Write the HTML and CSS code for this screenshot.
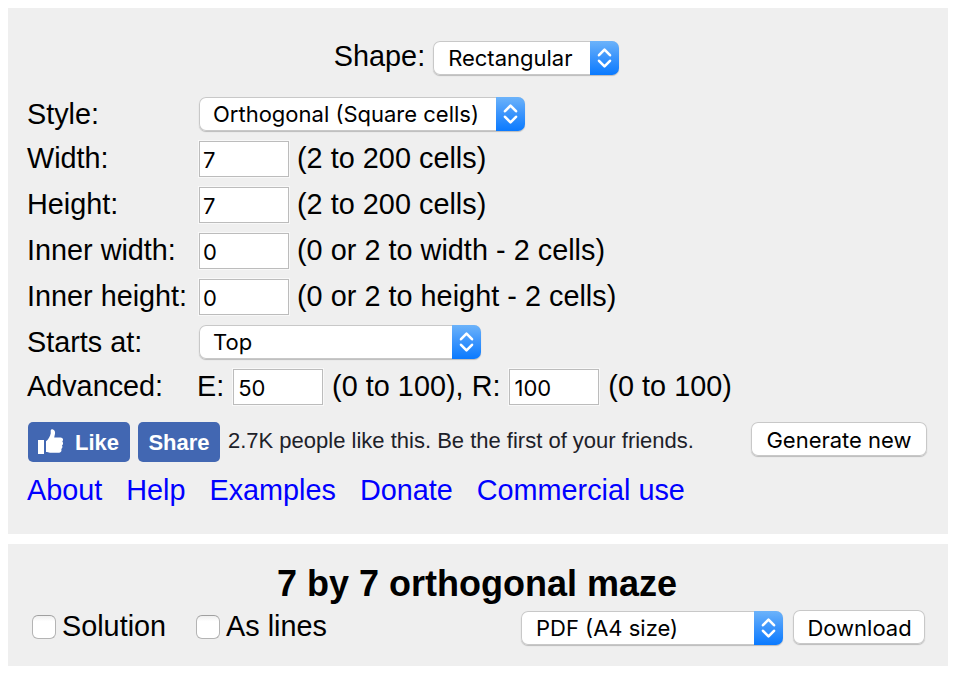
FILE: index.html
```
<!DOCTYPE html>
<html lang="en">
<head>
<meta charset="utf-8">
<title>Maze generator</title>
<link rel="stylesheet" href="styles.css">
</head>
<body>
<form class="panel settings">
  <div class="shape-row">
    <span>Shape:</span>
    <div class="select shape"><span class="value">Rectangular</span><span class="cap"><svg width="15" height="22" viewBox="0 0 15 22"><path d="M2 8.2 7.5 2.6 13 8.2M2 13.8 7.5 19.4 13 13.8"/></svg></span></div>
  </div>
  <div class="fields">
    <span>Style:</span>
    <div class="field"><div class="select style"><span class="value">Orthogonal (Square cells)</span><span class="cap"><svg width="15" height="22" viewBox="0 0 15 22"><path d="M2 8.2 7.5 2.6 13 8.2M2 13.8 7.5 19.4 13 13.8"/></svg></span></div></div>
    <span>Width:</span>
    <div class="field"><input type="text" value="7"><span>(2 to 200 cells)</span></div>
    <span>Height:</span>
    <div class="field"><input type="text" value="7"><span>(2 to 200 cells)</span></div>
    <span>Inner width:</span>
    <div class="field"><input type="text" value="0"><span>(0 or 2 to width - 2 cells)</span></div>
    <span>Inner height:</span>
    <div class="field"><input type="text" value="0"><span>(0 or 2 to height - 2 cells)</span></div>
    <span>Starts at:</span>
    <div class="field"><div class="select starts"><span class="value">Top</span><span class="cap"><svg width="15" height="22" viewBox="0 0 15 22"><path d="M2 8.2 7.5 2.6 13 8.2M2 13.8 7.5 19.4 13 13.8"/></svg></span></div></div>
    <span>Advanced:</span>
    <div class="field advanced"><span>E:</span><input type="text" value="50"><span>(0 to 100), R:</span><input type="text" value="100"><span>(0 to 100)</span></div>
  </div>
  <div class="actions">
    <div class="fb like"><svg width="26" height="26" viewBox="0 0 26 26"><path d="M0 11h6v14H0zM8 12.200C10.500 10.500 12 7.500 12.700 4.500V1.600Q12.900 0 14.500 .2C16.800 .8 17.300 2.800 17 4.800L16.200 8.500H22.500C25.200 8.600 25.700 11.300 24.300 12.400 25.500 13.700 25.200 15.600 24 16.300 24.800 17.700 24.400 19.400 23.300 20.100 24 22 23 23.700 21.300 23.700H12C10.500 23.700 9.500 23 8 23z"/></svg><span>Like</span></div>
    <div class="fb share">Share</div>
    <span class="count">2.7K people like this. Be the first of your friends.</span>
    <button type="button" class="generate">Generate new</button>
  </div>
  <nav class="links">
    <a href="#">About</a><a href="#">Help</a><a href="#">Examples</a><a href="#">Donate</a><a href="#">Commercial use</a>
  </nav>
</form>
<section class="panel result">
  <h1>7 by 7 orthogonal maze</h1>
  <div class="output">
    <label><input type="checkbox">Solution</label>
    <label><input type="checkbox">As lines</label>
    <div class="select format"><span class="value">PDF (A4 size)</span><span class="cap"><svg width="15" height="22" viewBox="0 0 15 22"><path d="M2 8.2 7.5 2.6 13 8.2M2 13.8 7.5 19.4 13 13.8"/></svg></span></div>
    <button type="button" class="download">Download</button>
  </div>
</section>
</body>
</html>
```
FILE: styles.css
```
* { box-sizing: border-box; }

body {
  margin: 8px 12px 8px 8px;
  background: #fff;
  color: #000;
  font: 28.8px/34px "Liberation Sans", Arial, sans-serif;
  white-space: nowrap;
}

.panel { background: #efefef; }

.settings {
  height: 526px;
  padding: 31px 19px 0;
}

.shape-row {
  display: flex;
  justify-content: center;
  gap: 8px;
  height: 34px;
  padding-right: 3px;
}

.shape { margin-top: 2px; width: 186px; }

.select {
  display: flex;
  justify-content: space-between;
  height: 34px;
  overflow: hidden;
  border-radius: 7px;
  background: #fff;
  box-shadow: inset 0 0 0 1px #c8c8c8, 0 1px 1px rgba(0, 0, 0, .22);
  font: 22px/34px Inter, sans-serif;
}

.value { padding-left: 14px; }
.shape .value, .format .value { padding-left: 15px; }

.cap {
  display: flex;
  align-items: center;
  justify-content: center;
  width: 29px;
  background: linear-gradient(#6cb3fa, #3f97fc 45%, #0a7aff);
}

.cap path {
  fill: none;
  stroke: #fff;
  stroke-width: 2.6;
  stroke-linecap: round;
  stroke-linejoin: round;
}

.fields {
  display: grid;
  grid-template-columns: 172px 1fr;
  row-gap: 10px;
  margin-top: 24px;
}

.field { display: flex; gap: 8px; }
.field > span { letter-spacing: .03px; }
.advanced { gap: 8.9px; margin-left: -2px; }
.style { width: 326px; }
.starts { width: 282px; }

input[type="text"] {
  width: 90px;
  height: 36px;
  margin: 0;
  padding: 2px 3px 0;
  border: 1px solid #bcbcbc;
  outline: 1px solid #f8f8f8;
  border-radius: 0;
  background: #fff;
  color: #000;
  font: 22px/30px Inter, sans-serif;
}

.advanced input { padding-left: 4px; }

.actions {
  display: flex;
  height: 40px;
  margin-top: 17px;
  padding: 0 2px 0 1px;
}

.fb {
  height: 40px;
  border-radius: 5px;
  background: #4267b2;
  color: #fff;
  font: bold 22px/41px "Liberation Sans", Arial, sans-serif;
}

.like { display: flex; width: 102px; padding-left: 10px; }
.like svg { margin: 7px 12px 0 0; fill: #fff; }
.like span { margin-left: -1px; }
.share { width: 82px; margin-left: 8px; text-align: center; }

.count {
  margin-left: 8px;
  color: #1d2129;
  font-size: 22px;
  line-height: 37px;
}

button {
  height: 34px;
  margin: 0 0 0 auto;
  padding: 2px 0 0;
  border: 0;
  border-radius: 7px;
  background: #fff;
  box-shadow: inset 0 0 0 1px #c8c8c8, 0 1px 1px rgba(0, 0, 0, .22);
  color: #000;
  font: 22px/32px Inter, sans-serif;
}

.generate { width: 176px; }

.links { display: flex; gap: 24px; margin-top: 11px; }
.links a { color: #00f; text-decoration: none; }

.result {
  height: 122px;
  margin-top: 10px;
  padding: 20px 23px 0 24px;
}

h1 {
  margin: 0;
  padding-right: 3px;
  font-size: 36px;
  line-height: 40px;
  text-align: center;
}

.output { display: flex; margin-top: 5px; }

label { display: flex; margin-right: 30px; }

input[type="checkbox"] {
  appearance: none;
  width: 24px;
  height: 24px;
  margin: 6px 6px 0 0;
  border: 1px solid #b4b4b4;
  border-top-color: #a0a0a0;
  border-radius: 6px;
  background: linear-gradient(#f0f0f0, #fff 25%);
}

.format { width: 262px; margin: 2px 0 0 auto; }
.download { width: 132px; margin: 1px 0 0 10px; padding-left: 1px; }
```
